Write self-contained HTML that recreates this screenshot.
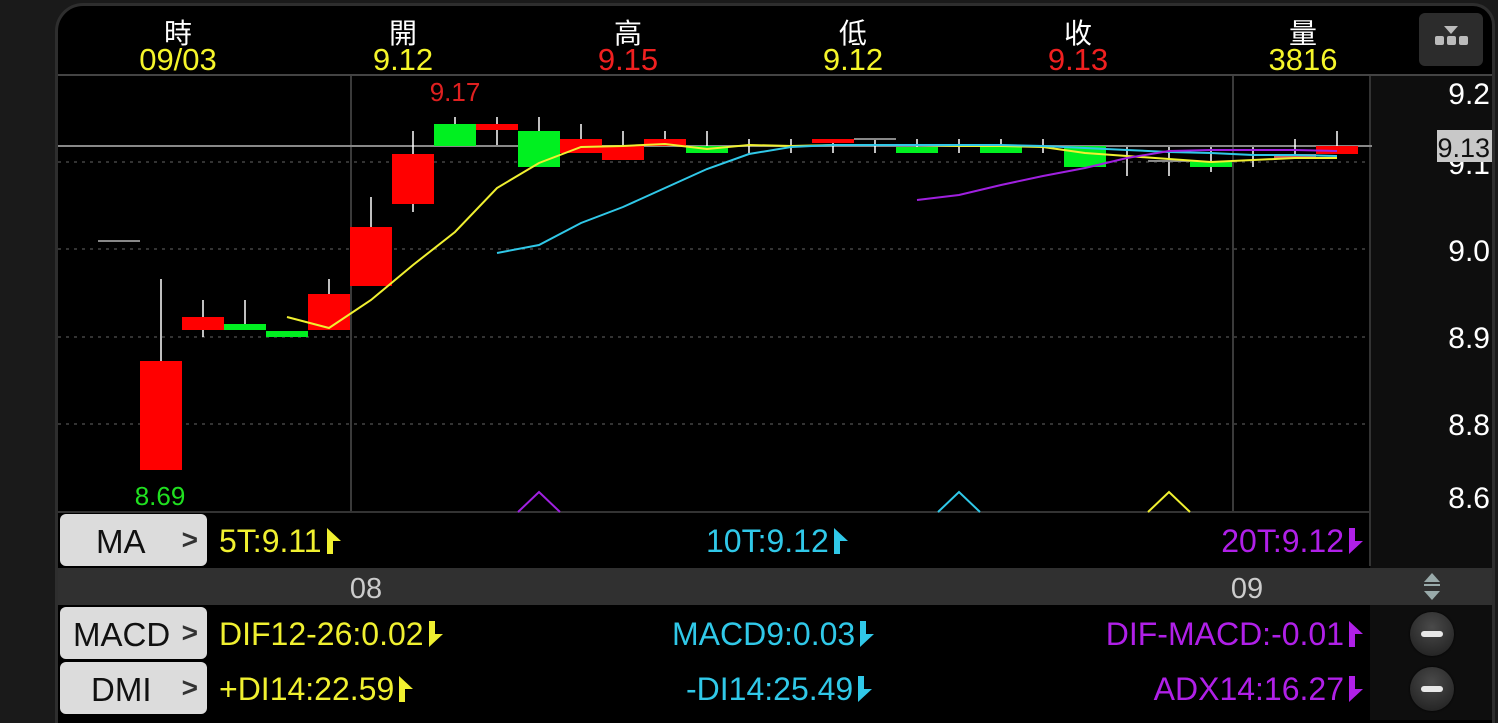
<!DOCTYPE html>
<html><head><meta charset="utf-8"><style>
body{margin:0;width:1498px;height:720px;background:#1a1a1a;overflow:hidden;font-family:"Liberation Sans","Noto Sans CJK TC",sans-serif;position:relative}
.frame{position:absolute;left:55px;top:3px;width:1440px;height:720px;background:#000;border-left:3px solid #2e2e2e;border-top:3px solid #2e2e2e;border-right:3px solid #2e2e2e;border-radius:28px 22px 0 0;box-sizing:border-box}
.a{position:absolute}
.h{font-size:28px;color:#fff;text-align:center;width:120px}
.v{font-size:31px;color:#f5f52a;text-align:center;width:160px}
.btn{position:absolute;left:60px;width:147px;height:52px;background:#dcdcdc;border-radius:6px;color:#111;font-size:33px}
.btn span{position:absolute;top:9px}
.btn i{position:absolute;right:9px;top:10px;font-style:normal;font-size:28px;color:#333;font-weight:bold}
.t{position:absolute;font-size:32px;white-space:nowrap;display:flex;align-items:center;height:40px}
.t svg{margin-left:5px}
.minus{position:absolute;left:1410px;width:44px;height:44px;border-radius:50%;background:radial-gradient(circle at 50% 35%,#4a4a4a,#1c1c1c);box-shadow:0 0 2px #000}
.minus:after{content:"";position:absolute;left:11px;top:19px;width:22px;height:6px;border-radius:3px;background:#e8e8e8}
</style></head><body>
<div class="frame"></div>
<div class="a" style="left:1370px;top:76px;width:122px;height:644px;background:#0e0e0e"></div>
<div class="a" style="left:58px;top:74px;width:1434px;height:2px;background:#444"></div>
<div class="a h" style="left:118px;top:12px">時</div><div class="a v" style="left:98px;top:42px">09/03</div>
<div class="a h" style="left:343px;top:12px">開</div><div class="a v" style="left:323px;top:42px">9.12</div>
<div class="a h" style="left:568px;top:12px">高</div><div class="a v" style="left:548px;top:42px;color:#f02020">9.15</div>
<div class="a h" style="left:793px;top:12px">低</div><div class="a v" style="left:773px;top:42px">9.12</div>
<div class="a h" style="left:1018px;top:12px">收</div><div class="a v" style="left:998px;top:42px;color:#f02020">9.13</div>
<div class="a h" style="left:1243px;top:12px">量</div><div class="a v" style="left:1223px;top:42px">3816</div>
<div class="a" style="left:1419px;top:13px;width:64px;height:53px;background:#2c2c2c;border-radius:6px">
<svg width="64" height="53"><polygon points="25,13 39,13 32,21" fill="#bbb"/><rect x="16" y="23" width="9" height="9" rx="2" fill="#bbb"/><rect x="28" y="23" width="9" height="9" rx="2" fill="#bbb"/><rect x="40" y="23" width="9" height="9" rx="2" fill="#bbb"/></svg></div>
<svg class="a" style="left:0;top:0" width="1498" height="720">
<g stroke="#444" stroke-width="1.5" stroke-dasharray="3,5"><line x1="58" y1="162" x2="1370" y2="162"/><line x1="58" y1="249" x2="1370" y2="249"/><line x1="58" y1="337" x2="1370" y2="337"/><line x1="58" y1="424" x2="1370" y2="424"/></g>
<line x1="351" y1="76" x2="351" y2="512" stroke="#3a3a3a" stroke-width="2"/>
<line x1="1233" y1="76" x2="1233" y2="512" stroke="#3a3a3a" stroke-width="2"/>
<line x1="1370" y1="76" x2="1370" y2="566" stroke="#333" stroke-width="2"/>
<line x1="58" y1="512" x2="1370" y2="512" stroke="#333" stroke-width="2"/>
<line x1="58" y1="146" x2="1372" y2="146" stroke="#888" stroke-width="2"/>
<g stroke="#fff" stroke-width="1.5">
<line x1="161" y1="279" x2="161" y2="361"/><line x1="203" y1="300" x2="203" y2="337"/><line x1="245" y1="300" x2="245" y2="330"/><line x1="329" y1="279" x2="329" y2="294"/><line x1="371" y1="197" x2="371" y2="227"/><line x1="413" y1="131" x2="413" y2="212"/><line x1="455" y1="117" x2="455" y2="124"/><line x1="497" y1="117" x2="497" y2="145"/><line x1="539" y1="117" x2="539" y2="131"/><line x1="581" y1="124" x2="581" y2="139"/><line x1="623" y1="131" x2="623" y2="146"/><line x1="665" y1="131" x2="665" y2="139"/><line x1="707" y1="131" x2="707" y2="146"/><line x1="749" y1="139" x2="749" y2="153"/><line x1="791" y1="139" x2="791" y2="153"/><line x1="833" y1="139" x2="833" y2="153"/><line x1="875" y1="139" x2="875" y2="153"/><line x1="917" y1="139" x2="917" y2="147"/><line x1="959" y1="139" x2="959" y2="153"/><line x1="1001" y1="139" x2="1001" y2="147"/><line x1="1043" y1="139" x2="1043" y2="153"/><line x1="1127" y1="147" x2="1127" y2="176"/><line x1="1169" y1="147" x2="1169" y2="176"/><line x1="1211" y1="147" x2="1211" y2="172"/><line x1="1253" y1="147" x2="1253" y2="167"/><line x1="1295" y1="139" x2="1295" y2="154"/><line x1="1337" y1="131" x2="1337" y2="146"/>
</g>
<g fill="#ff0000"><rect x="140" y="361" width="42" height="109"/><rect x="182" y="317" width="42" height="13"/><rect x="308" y="294" width="42" height="36"/><rect x="350" y="227" width="42" height="59"/><rect x="392" y="154" width="42" height="50"/><rect x="476" y="124" width="42" height="6"/><rect x="560" y="139" width="42" height="14"/><rect x="602" y="146" width="42" height="14"/><rect x="644" y="139" width="42" height="7"/><rect x="812" y="139" width="42" height="4"/><rect x="1274" y="154" width="42" height="4" fill="#d06060"/><rect x="1316" y="146" width="42" height="8"/></g>
<g fill="#00f020"><rect x="224" y="324" width="42" height="6"/><rect x="266" y="331" width="42" height="6"/><rect x="434" y="124" width="42" height="22"/><rect x="518" y="131" width="42" height="36"/><rect x="686" y="146" width="42" height="7"/><rect x="896" y="147" width="42" height="6"/><rect x="980" y="147" width="42" height="6"/><rect x="1064" y="146" width="42" height="21"/><rect x="1190" y="161" width="42" height="6"/></g>
<g stroke="#888" stroke-width="2"><line x1="98" y1="241" x2="140" y2="241"/><line x1="854" y1="139" x2="896" y2="139"/><line x1="1148" y1="161" x2="1190" y2="161"/></g>
<g fill="none" stroke-width="2">
<polyline stroke="#f0f030" points="287,317 329,328 371,300 413,265 455,232 497,188 539,163 581,147 623,146 665,144 707,149 749,145 791,146 833,145 875,145 917,145 959,146 1001,146 1043,147 1085,153 1127,156 1169,159 1211,162 1253,160 1295,158 1337,158"/>
<polyline stroke="#30c8e8" points="497,253 539,245 581,223 623,207 665,188 707,169 749,154 791,147 833,145 875,145 917,145 959,145 1001,145 1043,146 1085,148 1127,150 1169,152 1211,153 1253,155 1295,155 1337,156"/>
<polyline stroke="#a020e0" points="917,200 959,195 1001,185 1043,176 1085,168 1127,158 1169,151 1211,150 1253,150 1295,150 1337,151"/>
<polyline stroke="#a020e0" points="518,512 539,492 560,512"/>
<polyline stroke="#30c8e8" points="938,512 959,492 980,512"/>
<polyline stroke="#f0f030" points="1148,512 1169,492 1190,512"/>
</g>
<text x="455" y="101" fill="#e02020" font-size="26" text-anchor="middle" font-family="Liberation Sans">9.17</text>
<text x="160" y="505" fill="#20e020" font-size="26" text-anchor="middle" font-family="Liberation Sans">8.69</text>
<g fill="#fff" font-size="30" text-anchor="end" font-family="Liberation Sans"><text x="1490" y="104">9.2</text><text x="1490" y="174">9.1</text><text x="1490" y="261">9.0</text><text x="1490" y="348">8.9</text><text x="1490" y="435">8.8</text><text x="1490" y="508">8.6</text></g>
<rect x="1437" y="130" width="55" height="32" fill="#c8c8c8"/>
<text x="1490" y="157" fill="#111" font-size="27" text-anchor="end" font-family="Liberation Sans">9.13</text>
<rect x="58" y="568" width="1434" height="37" fill="#303030"/>
<text x="366" y="598" fill="#ccc" font-size="29" text-anchor="middle" font-family="Liberation Sans">08</text>
<text x="1247" y="598" fill="#ccc" font-size="29" text-anchor="middle" font-family="Liberation Sans">09</text>
<polygon points="1432,573 1424,582 1440,582" fill="#9aa"/><rect x="1424" y="584" width="16" height="2" fill="#9aa"/><polygon points="1432,600 1424,591 1440,591" fill="#9aa"/>
</svg>
<div class="btn" style="top:514px"><span style="left:36px">MA</span><i>&gt;</i></div>
<div class="btn" style="top:607px"><span style="left:13px">MACD</span><i>&gt;</i></div>
<div class="btn" style="top:662px"><span style="left:31px">DMI</span><i>&gt;</i></div>
<div class="t" style="left:219px;top:521px;color:#f0f030">5T:9.11<svg width="15" height="26"><polygon points="0,0 14,13 6,13 6,26 0,26" fill="#f0f030"/></svg></div>
<div class="t" style="left:706px;top:521px;color:#30c8e8">10T:9.12<svg width="15" height="26"><polygon points="0,0 14,13 6,13 6,26 0,26" fill="#30c8e8"/></svg></div>
<div class="t" style="right:134px;top:521px;color:#b020e8">20T:9.12<svg width="15" height="26"><polygon points="0,0 6,0 6,13 14,13 0,26" fill="#b020e8"/></svg></div>
<div class="t" style="left:219px;top:614px;color:#f0f030">DIF12-26:0.02<svg width="15" height="26"><polygon points="0,0 6,0 6,13 14,13 0,26" fill="#f0f030"/></svg></div>
<div class="t" style="left:672px;top:614px;color:#30c8e8">MACD9:0.03<svg width="15" height="26"><polygon points="0,0 6,0 6,13 14,13 0,26" fill="#30c8e8"/></svg></div>
<div class="t" style="right:134px;top:614px;color:#b020e8">DIF-MACD:-0.01<svg width="15" height="26"><polygon points="0,0 14,13 6,13 6,26 0,26" fill="#b020e8"/></svg></div>
<div class="t" style="left:219px;top:669px;color:#f0f030">+DI14:22.59<svg width="15" height="26"><polygon points="0,0 14,13 6,13 6,26 0,26" fill="#f0f030"/></svg></div>
<div class="t" style="left:686px;top:669px;color:#30c8e8">-DI14:25.49<svg width="15" height="26"><polygon points="0,0 6,0 6,13 14,13 0,26" fill="#30c8e8"/></svg></div>
<div class="t" style="right:134px;top:669px;color:#b020e8">ADX14:16.27<svg width="15" height="26"><polygon points="0,0 6,0 6,13 14,13 0,26" fill="#b020e8"/></svg></div>
<div class="minus" style="top:612px"></div>
<div class="minus" style="top:667px"></div>
</body></html>
